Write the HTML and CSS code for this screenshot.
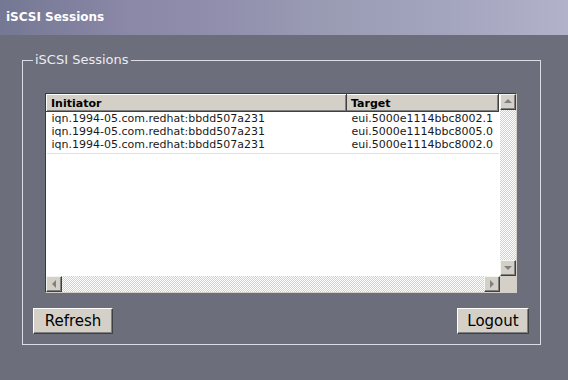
FILE: index.html
```html
<!DOCTYPE html>
<html lang="en">
<head>
    <meta charset="UTF-8">
    <title>iSCSI Sessions</title>
    <link rel="stylesheet" href="styles.css">
</head>
<body>

    <div class="page-title">iSCSI Sessions</div>

    <div class="main">
        <fieldset class="sessions">
            <legend>iSCSI Sessions</legend>

            <div class="listview">
                <div class="list-body">
                    <table class="session-table">
                        <thead>
                            <tr>
                                <th class="col-initiator">Initiator</th>
                                <th class="col-target">Target</th>
                            </tr>
                        </thead>
                        <tbody>
                            <tr>
                                <td>iqn.1994-05.com.redhat:bbdd507a231</td>
                                <td>eui.5000e1114bbc8002.1</td>
                            </tr>
                            <tr>
                                <td>iqn.1994-05.com.redhat:bbdd507a231</td>
                                <td>eui.5000e1114bbc8005.0</td>
                            </tr>
                            <tr>
                                <td>iqn.1994-05.com.redhat:bbdd507a231</td>
                                <td>eui.5000e1114bbc8002.0</td>
                            </tr>
                        </tbody>
                    </table>
                </div>

                <div class="vscroll">
                    <div class="scroll-btn"><span class="arrow up"></span></div>
                    <div class="track"></div>
                    <div class="scroll-btn"><span class="arrow down"></span></div>
                </div>

                <div class="hscroll">
                    <div class="scroll-btn"><span class="arrow left"></span></div>
                    <div class="track"></div>
                    <div class="scroll-btn"><span class="arrow right"></span></div>
                </div>

                <div class="corner"></div>
            </div>

            <div class="actions">
                <button type="button" class="btn btn-refresh">Refresh</button>
                <button type="button" class="btn btn-logout">Logout</button>
            </div>
        </fieldset>
    </div>

</body>
</html>
```

FILE: styles.css
```css
body {
    margin: 0;
    background: #6c6e7c;
    font-family: 'DejaVu Sans', Verdana, sans-serif;
    height: 380px;
    overflow: hidden;
}

.page-title {
    height: 35px;
    box-sizing: border-box;
    padding: 10px 0 0 6px;
    background: linear-gradient(90deg, #747893 0%, #8a87a7 22%, #918fad 40%, #9a9cb4 58%, #a3a4bd 78%, #b2b3ca 100%);
    color: #fff;
    font-size: 12px;
    font-weight: bold;
    line-height: 14px;
}

.main {
    padding: 17px 0 0 22px;
}

.sessions {
    box-sizing: border-box;
    width: 519px;
    margin: 0;
    padding: 0 11px 10px 10px;
    border: 1px solid #dcdce4;
}

.sessions legend {
    padding: 0 2px;
    color: #ececf0;
    font-size: 13px;
    line-height: 16px;
}

.listview {
    display: grid;
    grid-template-columns: 1fr 16px;
    grid-template-rows: 1fr 16px;
    height: 200px;
    margin: 25px 12px 0;
    box-sizing: border-box;
    border: 1px solid;
    border-color: #3a3a3a #d4d0c8 #d4d0c8 #3a3a3a;
    background: #fff;
}

.list-body {
    overflow: hidden;
    padding-right: 1px;
}

.session-table {
    width: 100%;
    border-collapse: collapse;
    table-layout: fixed;
    font-size: 11px;
    color: #1a1a1a;
}

.session-table th {
    height: 17px;
    box-sizing: border-box;
    padding: 0 0 0 4px;
    background: #d4d0c8;
    border-top: 1px solid #fff;
    border-left: 1px solid #fff;
    border-right: 1px solid #404040;
    border-bottom: 1px solid #404040;
    box-shadow: inset -1px -1px #808080;
    text-align: left;
    font-weight: bold;
    color: #000;
}

.col-initiator {
    width: 300px;
}

.session-table td {
    height: 13px;
    padding: 0 0 0 5px;
    line-height: 13px;
    white-space: nowrap;
    overflow: hidden;
}

.session-table tbody {
    border-bottom: 1px solid #e2e2e2;
}

.session-table tbody tr:last-child td {
    height: 15px;
    vertical-align: top;
}

.vscroll,
.hscroll {
    display: flex;
}

.vscroll {
    flex-direction: column;
}

.track {
    flex: 1;
    background: repeating-conic-gradient(#d4d0c8 0 25%, #fff 0 50%) 0 0 / 2px 2px;
}

.scroll-btn {
    width: 16px;
    height: 16px;
    box-sizing: border-box;
    display: flex;
    justify-content: center;
    align-items: center;
    background: #d4d0c8;
    border: 1px solid;
    border-color: #f4f4f0 #404040 #404040 #f4f4f0;
    box-shadow: inset -1px -1px #808080;
}

.arrow {
    width: 0;
    height: 0;
    border: 4px solid transparent;
}

.arrow.up {
    border-bottom-color: #808080;
    border-top-width: 0;
    margin-top: -2px;
}

.arrow.down {
    border-top-color: #808080;
    border-bottom-width: 0;
}

.arrow.left {
    border-right-color: #808080;
    border-left-width: 0;
}

.arrow.right {
    border-left-color: #808080;
    border-right-width: 0;
}

.corner {
    background: #d4d0c8;
}

.actions {
    display: flex;
    justify-content: space-between;
    margin-top: 15px;
}

.btn {
    height: 26px;
    padding: 0;
    background: #d4d0c8;
    border: 1px solid;
    border-color: #fff #404040 #404040 #fff;
    box-shadow: inset -1px -1px #808080;
    font-family: 'DejaVu Sans', Verdana, sans-serif;
    font-size: 15px;
    color: #000;
    cursor: pointer;
}

.btn-refresh {
    width: 80px;
}

.btn-logout {
    width: 72px;
}
```
